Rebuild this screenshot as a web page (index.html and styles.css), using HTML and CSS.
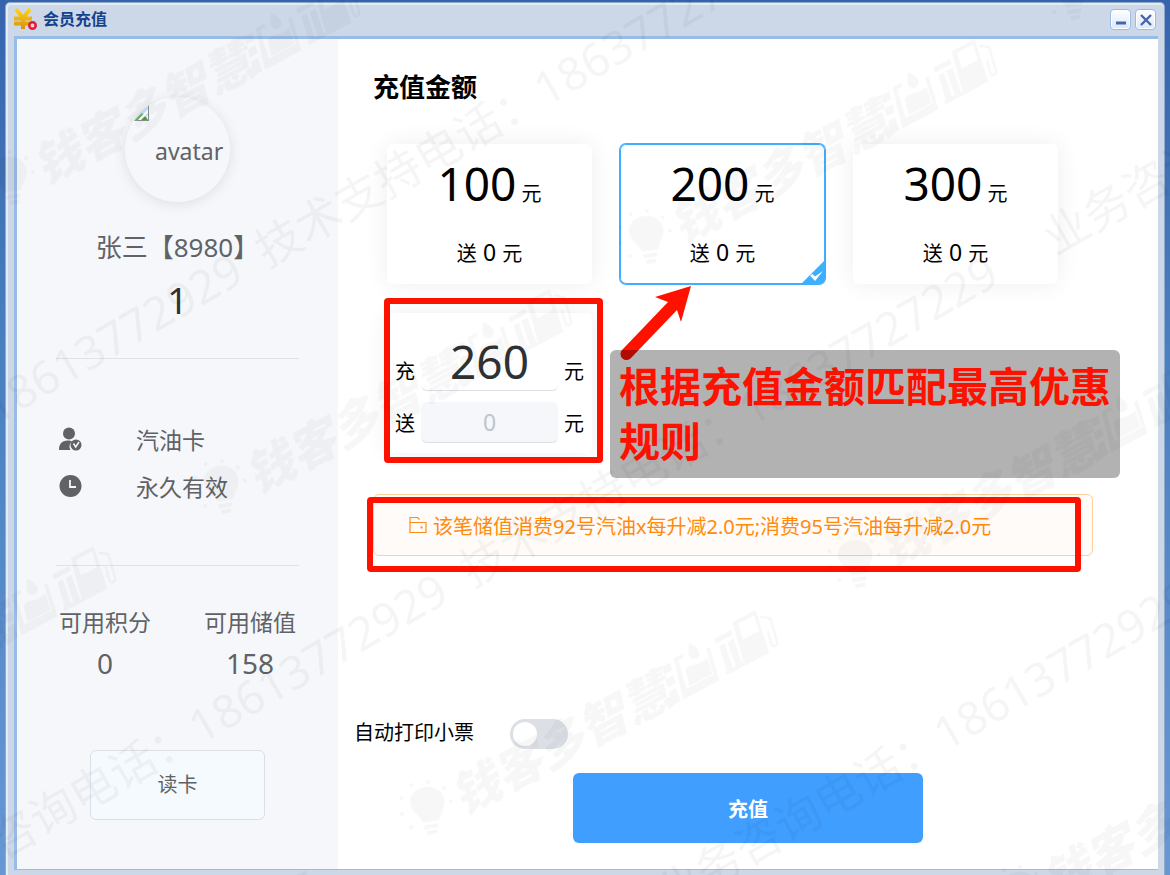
FILE: index.html
```html
<!DOCTYPE html>
<html lang="zh-CN">
<head>
  <meta charset="UTF-8">
  <meta name="viewport" content="width=device-width, initial-scale=1.0">
  <title>会员充值</title>
  <link rel="stylesheet" href="styles.css">
</head>
<body>
  <div class="window">
    <header class="titlebar">
      <svg class="title-icon" viewBox="0 0 24 24" width="24" height="24" aria-hidden="true">
        <defs>
          <linearGradient id="gold" x1="0" y1="0" x2="0" y2="1">
            <stop offset="0" stop-color="#ffd21a"/>
            <stop offset="1" stop-color="#d9920c"/>
          </linearGradient>
        </defs>
        <path d="M2 1 L9 10 L16 1 M9 10 V21 M0 10.500 H18 M0 15.500 H18" fill="none" stroke="url(#gold)" stroke-width="4"/>
        <circle cx="18.500" cy="17.500" r="3.200" fill="#fbd5da" stroke="#e0203c" stroke-width="2.600"/>
      </svg>
      <h1>会员充值</h1>
      <button class="tool" aria-label="最小化">
        <svg viewBox="0 0 16 16" width="16" height="16"><path d="M3 11h10" stroke="#4a63ad" stroke-width="3"/></svg>
      </button>
      <button class="tool" aria-label="关闭">
        <svg viewBox="0 0 16 16" width="16" height="16"><path d="M3 3l10 10M13 3L3 13" stroke="#4a63ad" stroke-width="2.400"/></svg>
      </button>
    </header>

    <div class="content">
      <!-- Member info -->
      <aside class="sidebar">
        <div class="avatar">
          <svg viewBox="0 0 16 16" width="16" height="16" aria-hidden="true">
            <path d="M2 2h13v8L8 15H2z" fill="#c3dafb"/>
            <path d="M1 16l8-8 2 2-6 6z" fill="#5fae46"/>
            <path d="M7 15c1-4 3-5 6-3l2 3z" fill="#4ea33c"/>
            <path d="M4 16L15 4v4l-8 8z" fill="#fff"/>
            <path d="M15.500 0v16M3 15.500h13" stroke="#8b8f96" stroke-width="1"/>
          </svg>
          <span>avatar</span>
        </div>
        <p class="member-name">张三【8980】</p>
        <p class="member-no">1</p>
        <ul class="info">
          <li>
            <svg viewBox="0 0 24 24" width="24" height="24" fill="#606266" aria-hidden="true">
              <circle cx="11" cy="6.500" r="6"/>
              <path d="M1 23c0-6 3-9.500 8.500-9.500 2 0 3.500.3 4.500 1-2.500 2-3.200 5.500-1.500 8.500z"/>
              <circle cx="18" cy="18" r="5.500"/>
              <path d="M15.500 16.500l2.200 3.500 3.300-5" fill="none" stroke="#f5f7fb" stroke-width="1.500"/>
            </svg>
            <span>汽油卡</span>
          </li>
          <li>
            <svg viewBox="0 0 24 24" width="24" height="24" aria-hidden="true">
              <circle cx="12.500" cy="12" r="11" fill="#606266"/>
              <path d="M12 6v7h6" fill="none" stroke="#f5f7fb" stroke-width="1.800"/>
            </svg>
            <span>永久有效</span>
          </li>
        </ul>
        <dl class="stats">
          <div>
            <dt>可用积分</dt>
            <dd>0</dd>
          </div>
          <div>
            <dt>可用储值</dt>
            <dd>158</dd>
          </div>
        </dl>
        <button class="read-card">读卡</button>
      </aside>

      <!-- Recharge form -->
      <main class="main">
        <h2>充值金额</h2>
        <div class="cards">
          <label class="card">
            <input type="radio" name="amount">
            <span class="amount"><b>100</b> 元</span>
            <span class="gift">送 <b>0</b> 元</span>
          </label>
          <label class="card">
            <input type="radio" name="amount" checked>
            <span class="amount"><b>200</b> 元</span>
            <span class="gift">送 <b>0</b> 元</span>
            <svg class="corner" viewBox="0 0 24 24" width="24" height="24" aria-hidden="true">
              <path d="M24 0v24H0z" fill="#3eaeff"/>
              <path d="M9 15.500l5 5.500 8-10-8 5.500-2.500-2.500z" fill="#fff"/>
            </svg>
          </label>
          <label class="card">
            <input type="radio" name="amount">
            <span class="amount"><b>300</b> 元</span>
            <span class="gift">送 <b>0</b> 元</span>
          </label>
          <div class="card custom">
            <div class="field">
              <label for="pay">充</label>
              <input class="pay" id="pay" type="text" value="260">
              <span>元</span>
            </div>
            <div class="field">
              <label for="give">送</label>
              <input class="give" id="give" type="text" value="0" disabled>
              <span>元</span>
            </div>
          </div>
          <svg class="arrow" viewBox="0 0 80 80" width="80" height="80" aria-hidden="true">
            <path d="M7 65 a6 6 0 0 0 9 8 L62 25 L66 37 L76 1 L40 12 L53 17 Z" fill="#ff1100"/>
          </svg>
          <p class="callout">根据充值金额匹配最高优惠规则</p>
        </div>

        <div class="tip">
          <svg viewBox="0 0 18 18" width="18" height="18" fill="none" stroke="#ff8a1c" stroke-width="1.200" aria-hidden="true">
            <path d="M1 6.500h16v10H1zM1 6.500v-5h7.500l2 2"/>
            <path d="M11.500 11.500h2" stroke-width="2"/>
          </svg>
          <span>该笔储值消费92号汽油x每升减2.0元;消费95号汽油每升减2.0元</span>
        </div>

        <div class="print">
          <label for="print">自动打印小票</label>
          <input class="switch" id="print" type="checkbox">
        </div>
        <button class="submit">充值</button>
      </main>
    </div>
  </div>

  <!-- Watermark -->
  <svg class="watermark" aria-hidden="true">
    <defs>
      <g id="brand">
        <path d="M-14 -12c6-12 26-12 32 0 5 12-5 19-7 26 h-16c-2-8-13-15-9-26z" transform="rotate(18)"/>
        <path d="M-5 17h14v4H-5zM-3 23h10v4H-3z" transform="rotate(18)"/>
        <circle cx="-24" cy="-6" r="2"/><circle cx="-17" cy="-20" r="2"/><circle cx="-2" cy="-27" r="2"/>
        <circle cx="14" cy="-22" r="2"/><circle cx="25" cy="-9" r="2"/><circle cx="-22" cy="10" r="2"/><circle cx="25" cy="6" r="2"/>
        <text class="brand-text" x="29" y="24">钱客多智慧</text>
        <!-- oil and pump marks -->
        <g transform="translate(-24 0)">
          <path d="M299-14l9 0-2 8-9 0zM296-1l9 0-2 8-9 0zM293 12l8-1-2 14-10 0z"/>
          <path d="M313-16h10l-1 4h-6l-6 29h31l5-26h4l-7 34h-41z"/>
          <path d="M318 0c8-5 13 4 25-1l-3 17h-26zM334-22c7 9 6 16 0 17-8 0-8-8 0-17z"/>
          <path d="M358-14h19l-1 5h-19zM359-5h6l-4 25h-7zM368-5h7l-4 25h-7zM352 20h20v4h-20z"/>
          <path fill-rule="evenodd" d="M382-20h26l-8 44h-28zM386-16l-3 16h18l3-16z"/>
          <path d="M409-12l8 6-5 24c-1 4-7 4-6-1l3-13" fill="none" stroke="#000" stroke-width="2.500"/>
        </g>
      </g>
    </defs>
    <g class="brands">
      <use href="#brand" transform="translate(8 178) rotate(-28)"/>
      <use href="#brand" transform="translate(645 237) rotate(-28)"/>
      <use href="#brand" transform="translate(220 487) rotate(-28)"/>
      <use href="#brand" transform="translate(426 808) rotate(-28)"/>
      <use href="#brand" transform="translate(854 561) rotate(-28)"/>
      <use href="#brand" transform="translate(1069 -7) rotate(-28)"/>
      <use href="#brand" transform="translate(1018 893) rotate(-28)"/>
      <use href="#brand" transform="translate(-236 744) rotate(-28)"/>
      <use href="#brand" transform="translate(-24 1068) rotate(-28)"/>
    </g>
    <g class="phones">
      <text transform="translate(-283 586) rotate(-30)">业务咨询电话：18613772929 &#160;技术支持电话：18637727229</text>
      <text transform="translate(-78 906) rotate(-30)">业务咨询电话：18613772929 &#160;技术支持电话：18637727229</text>
      <text transform="translate(667 913) rotate(-30)">业务咨询电话：18613772929 &#160;技术支持电话：18637727229</text>
      <text transform="translate(1055 256) rotate(-30)">业务咨询电话：18613772929</text>
    </g>
  </svg>
</body>
</html>
```
FILE: styles.css
```css
/* General Styles */
* {
  box-sizing: border-box;
}

body {
  margin: 0;
  padding: 2px 5px 0;
  min-height: 100vh;
  display: flex;
  background: linear-gradient(#3564ac, #4a7fc0 40%, #6798d4);
  font-family: "Noto Sans", "Noto Sans CJK SC", sans-serif;
  font-size: 20px;
  color: #000;
  overflow: hidden;
}

h1, h2, p, ul, dl, dd {
  margin: 0;
  padding: 0;
}

button, input {
  font: inherit;
}

button {
  cursor: pointer;
}

/* Window */
.window {
  flex: 1;
  display: flex;
  flex-direction: column;
  padding: 0 6px 5px 8px;
  background: #ccd8e8;
  border: 1px solid #8ea9c9;
  border-bottom: 0;
  border-radius: 5px 5px 0 0;
  box-shadow: inset 1px 1px 0 1px #e3ebf4;
}

.titlebar {
  display: flex;
  align-items: center;
  gap: 4px;
  height: 33px;
  padding-right: 2px;
}

.titlebar h1 {
  flex: 1;
  margin-left: 1px;
  padding-bottom: 3px;
  font-size: 16px;
  font-weight: 600;
  color: #15428b;
}

.tool {
  display: flex;
  align-items: center;
  justify-content: center;
  width: 21px;
  height: 21px;
  padding: 0;
  border: 1px solid #99bbe8;
  border-radius: 4px;
  background: linear-gradient(#fff, #d8e8fb);
  box-shadow: inset 0 0 0 1px #fff;
}

.content {
  flex: 1;
  display: flex;
  background: #fff;
  border: solid #99bbe8;
  border-width: 3px 0 1px 3px;
}

/* Sidebar */
.sidebar {
  width: 321px;
  padding: 58px 39px 0;
  background: #f5f7fb;
  color: #606266;
  text-align: center;
}

.avatar {
  display: flex;
  width: 105px;
  height: 105px;
  margin: 0 auto;
  padding: 8px;
  gap: 6px;
  border-radius: 50%;
  overflow: hidden;
  box-shadow: 0 2px 14px rgba(0, 0, 0, 0.1);
  font-size: 23px;
}

.avatar svg {
  flex: none;
}

.avatar span {
  line-height: 92px;
}

.member-name {
  margin-top: 27px;
  font-size: 26px;
  line-height: 36px;
  white-space: nowrap;
}

.member-no {
  margin-top: 12px;
  padding-bottom: 33px;
  border-bottom: 1px solid #e0e2e6;
  font-size: 36px;
  line-height: 48px;
  color: #303133;
}

.info {
  padding: 56px 2px;
  border-bottom: 1px solid #e0e2e6;
  list-style: none;
  font-size: 23px;
}

.info li {
  display: grid;
  grid-template-columns: 78px auto;
  align-items: center;
  height: 47px;
  text-align: left;
}

.stats {
  display: flex;
  justify-content: space-between;
  padding: 36px 3px 66px;
}

.stats dt {
  font-size: 23px;
  line-height: 40px;
}

.stats dd {
  font-size: 28px;
  line-height: 42px;
}

.read-card {
  width: 175px;
  height: 70px;
  padding: 0 0 4px;
  border: 1px solid #dcdfe6;
  border-radius: 6px;
  background: #f5faff;
  color: #606266;
}

/* Main */
.main {
  flex: 1;
  display: flex;
  flex-direction: column;
  min-width: 0;
  padding: 28px 65px 26px 16px;
}

.main h2 {
  margin: 0 0 37px 19px;
  font-size: 26px;
  font-weight: 600;
  line-height: 40px;
}

.cards {
  position: relative;
  display: grid;
  grid-template-columns: repeat(auto-fill, 205px);
  gap: 29px 28px;
  margin-left: 33px;
}

.card {
  position: relative;
  display: flex;
  flex-direction: column;
  align-items: center;
  height: 140px;
  border-radius: 6px;
  background: #fff;
  box-shadow: 0 0 24px rgba(0, 0, 0, 0.07);
}

.card input[type="radio"] {
  position: absolute;
  opacity: 0;
}

.card:has(input:checked) {
  box-shadow: inset 0 0 0 1px #3eaeff, 0 0 0 1px #3eaeff;
}

.amount {
  margin-top: 6px;
  line-height: 66px;
}

.amount b {
  font-size: 46px;
  font-weight: 400;
}

.gift {
  margin-top: 10px;
  line-height: 30px;
}

.gift b {
  margin: 0 1px;
  font-size: 23px;
  font-weight: 400;
}

.corner {
  position: absolute;
  right: 0;
  bottom: 0;
  border-bottom-right-radius: 6px;
}

.custom {
  gap: 11px;
  padding: 18px 8px 0;
}

.field {
  display: flex;
  align-items: baseline;
  gap: 6px;
  width: 100%;
}

.field input {
  flex: 1;
  min-width: 0;
  padding: 0;
  border: 0;
  border-bottom: 1px solid #dcdfe6;
  border-radius: 6px;
  background: transparent;
  text-align: center;
}

.field .pay {
  height: 60px;
  font-size: 46px;
  color: #303133;
}

.field .give {
  height: 41px;
  font-size: 23px;
  background: #f5f7fa;
  color: #c0c4cc;
}

/* Red marks */
.custom::after,
.tip::after {
  content: "";
  position: absolute;
  border: 6px solid #ff1100;
  border-radius: 4px;
  pointer-events: none;
}

.custom::after {
  inset: -15px -11px -10px -3px;
}

.tip::after {
  inset: 2px 11px -17px -7px;
}

.arrow {
  position: absolute;
  left: 228px;
  top: 141px;
}

.callout {
  position: absolute;
  left: 223px;
  top: 206px;
  width: 510px;
  padding: 9px;
  border-radius: 6px;
  background: rgba(0, 0, 0, 0.3);
  font-size: 41px;
  font-weight: 700;
  line-height: 55px;
  color: #ff1100;
}

/* Tip */
.tip {
  position: relative;
  display: flex;
  align-items: center;
  gap: 6px;
  height: 62px;
  margin: 41px 0 0 19px;
  padding-left: 35px;
  border: 1px solid #ffcf9c;
  border-radius: 6px;
  background: #fffbf8;
  color: #ff8a0c;
}

/* Footer */
.print {
  display: flex;
  align-items: center;
  gap: 36px;
  margin-top: auto;
}

.print label {
  padding-bottom: 4px;
}

.switch {
  appearance: none;
  width: 58px;
  height: 30px;
  margin: 0;
  padding: 3px;
  border-radius: 15px;
  background: #dcdfe6;
}

.switch::before {
  content: "";
  display: block;
  width: 24px;
  height: 24px;
  border-radius: 50%;
  background: #fff;
}

.switch:checked {
  background: #409eff;
}

.switch:checked::before {
  margin-left: auto;
}

.submit {
  align-self: center;
  width: 350px;
  height: 70px;
  margin: 23px 0 0 49px;
  border: 0;
  border-radius: 6px;
  background: #409eff;
  color: #fff;
  font-weight: 600;
}

/* Watermark */
.watermark {
  position: fixed;
  inset: 0;
  width: 100%;
  height: 100%;
  pointer-events: none;
}

.brands {
  opacity: 0.035;
}

.phones {
  opacity: 0.04;
  font-size: 46px;
}

.brand-text {
  font-size: 48px;
  font-weight: 900;
  font-style: italic;
}
```
